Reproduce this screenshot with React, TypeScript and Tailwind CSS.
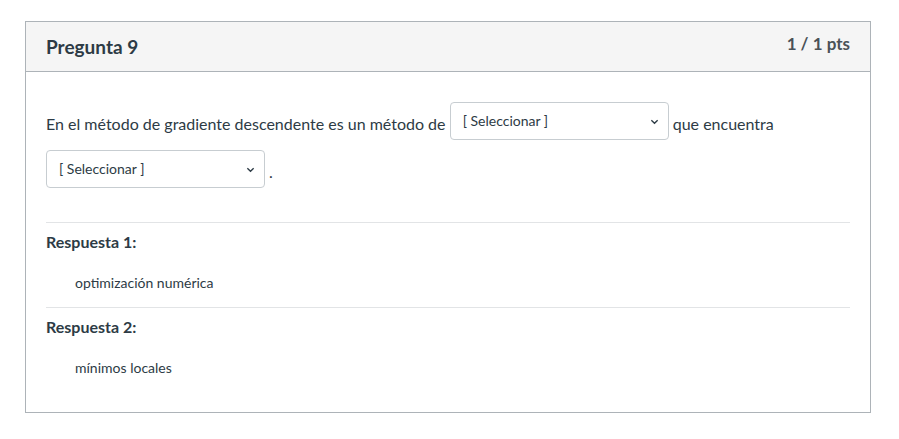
import React from 'react'

const Dropdown: React.FC<{ label?: string }> = ({ label = '[ Seleccionar ]' }) => (
  <span className="inline-flex align-[4px] items-center justify-between w-[219px] h-[38px] my-[5px] pl-[12px] pr-[9px] border border-[#c7cdd1] rounded-[4px] bg-white text-[14px] text-[#2d3b45] leading-none">
    <span>{label}</span>
    <svg width="9" height="9" viewBox="0 0 10 10" className="text-[#2d3b45]">
      <path d="M1.5 3.5 L5 7 L8.5 3.5" fill="none" stroke="currentColor" strokeWidth="1.5" />
    </svg>
  </span>
)

const Answer: React.FC<{ title: string; value: string }> = ({ title, value }) => (
  <div className="border-t border-[#e2e4e6] pt-[8px] pb-[14px]">
    <div className="font-bold text-[16px] leading-[22px] text-[#2d3b45]">{title}</div>
    <div className="pl-[29px] pt-[20px] text-[14px] leading-[20px] text-[#2d3b45]">{value}</div>
  </div>
)

export default function App() {
  return (
    <div className="min-h-screen bg-white pt-[21px] pl-[25px] font-['Lato','Liberation_Sans',sans-serif]">
      <div className="w-[846px] border border-[#adb3b8] bg-white">
        <div className="flex items-center justify-between h-[50px] px-[20px] bg-[#f5f5f5] border-b border-[#adb3b8]">
          <h2 className="font-bold text-[19px] text-[#2d3b45] mt-[1px]">Pregunta 9</h2>
          <span className="font-bold text-[17px] text-[#4a5157] -mt-[6px]">1 / 1 pts</span>
        </div>
        <div className="px-[20px] pt-[25px] pb-[20px]">
          <div className="text-[16px] text-[#2d3b45] leading-[20px]">
            En el método de gradiente descendente es un método de{' '}
            <Dropdown /> que encuentra <Dropdown /> .
          </div>
          <div className="mt-[29px]">
            <Answer title="Respuesta 1:" value="optimización numérica" />
            <Answer title="Respuesta 2:" value="mínimos locales" />
          </div>
        </div>
      </div>
    </div>
  )
}
